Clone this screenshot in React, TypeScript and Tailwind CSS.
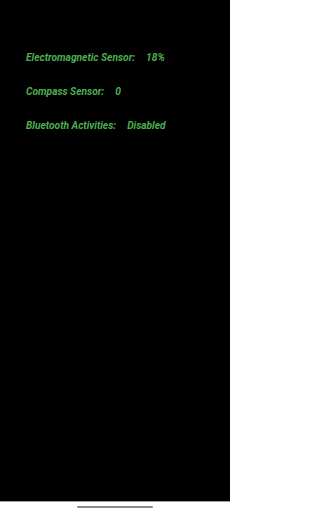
import React from "react";

const rows: [string, string][] = [
  ["Electromagnetic Sensor:", "18%"],
  ["Compass Sensor:", "0"],
  ["Bluetooth Activities:", "Disabled"],
];

export default function App() {
  return (
    <div className="w-[230px] h-[512px] flex flex-col bg-black" style={{ fontFamily: "Roboto, 'Noto Sans', sans-serif" }}>
      <div className="flex-1 flex flex-col gap-[22px] pt-[52px] pl-[26px]">
        {rows.map(([label, value]) => (
          <div key={label} className="flex gap-[11px] text-[10.2px] leading-[12px] font-bold italic text-[#4caf50]">
            <span>{label}</span>
            <span>{value}</span>
          </div>
        ))}
      </div>
      <div className="h-[11px] bg-white flex items-center justify-center border-t border-[#9e9e9e]">
        <div className="w-[76px] h-[2px] rounded-full bg-[#8a8a8a]" />
      </div>
    </div>
  );
}
